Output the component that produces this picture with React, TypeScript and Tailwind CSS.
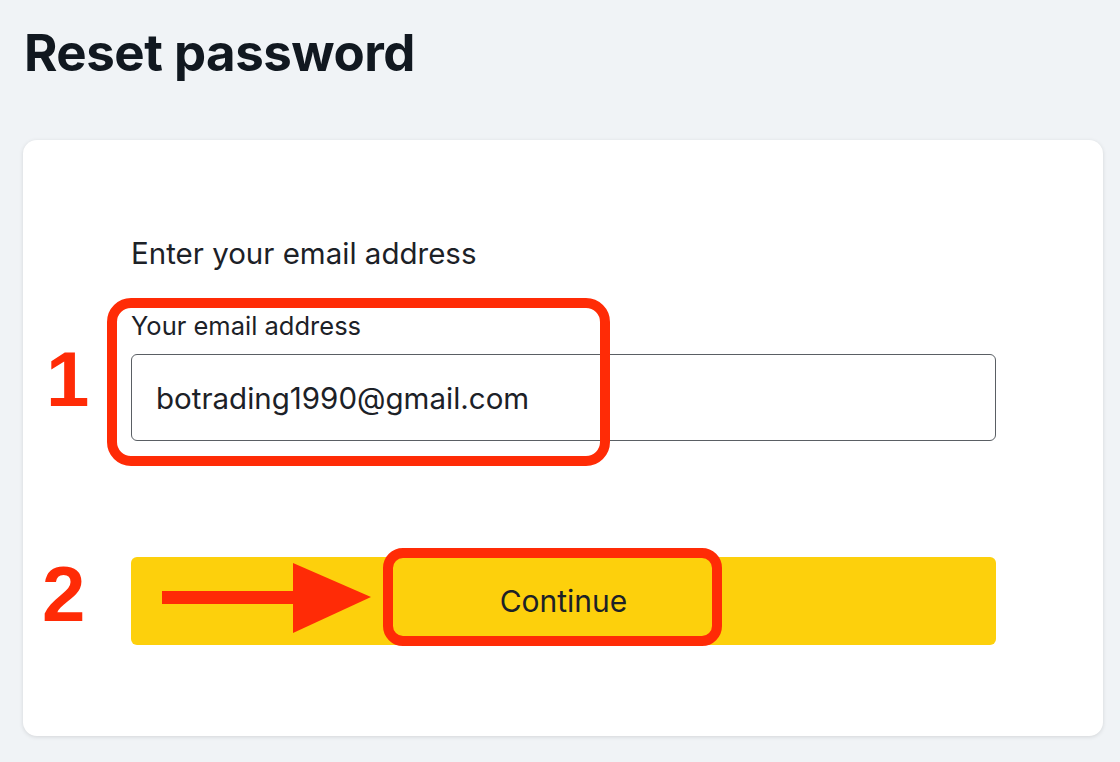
import React from 'react';

const RED = '#ff2b06';

export default function App() {
  return (
    <div
      className="w-[1120px] h-[762px] bg-[#f0f3f6] overflow-hidden relative"
      style={{ fontFamily: 'Inter, "Noto Sans", sans-serif' }}
    >
      <h1 className="pl-[24px] pt-[22px] text-[51px] leading-[62px] font-bold text-[#111820] tracking-[-0.5px]">
        Reset password
      </h1>

      <div className="ml-[23px] mt-[56px] w-[1080px] h-[596px] bg-white rounded-[14px] shadow-[0_1px_4px_rgba(0,0,0,0.12)] pl-[108px] pt-[94px] flex flex-col">
        <p className="text-[29.5px] leading-[38px] text-[#1c2127]">Enter your email address</p>

        <label className="mt-[38px] text-[25.5px] leading-[32px] text-[#1c2127]">Your email address</label>
        <div className="mt-[12px] w-[865px] h-[87px] border-[1.5px] border-[#5a5f64] rounded-[6px] flex items-center pl-[24px]">
          <span className="text-[29.5px] leading-[38px] text-[#1c2127]">botrading1990@gmail.com</span>
        </div>

        <button className="mt-[116px] w-[865px] h-[88px] bg-[#fdd00c] rounded-[6px] flex items-center justify-center text-[30px] text-[#1c2127]">
          Continue
        </button>
      </div>

      {/* annotations */}
      <div
        className="absolute left-[46px] top-[334px] text-[78px] leading-[90px] font-black"
        style={{ color: RED, fontFamily: '"Liberation Sans", Arial, sans-serif' }}
      >
        1
      </div>
      <div
        className="absolute left-[107px] top-[298px] w-[503px] h-[168px] rounded-[24px] border-[10px]"
        style={{ borderColor: RED }}
      />

      <div
        className="absolute left-[42px] top-[549px] text-[78px] leading-[90px] font-black"
        style={{ color: RED, fontFamily: '"Liberation Sans", Arial, sans-serif' }}
      >
        2
      </div>
      <svg className="absolute left-[160px] top-[560px]" width="215" height="76" viewBox="0 0 215 76">
        <rect x="2" y="31" width="140" height="13" fill={RED} />
        <polygon points="133,3 211,37 133,73" fill={RED} />
      </svg>
      <div
        className="absolute left-[383px] top-[548px] w-[339px] h-[98px] rounded-[20px] border-[10px]"
        style={{ borderColor: RED }}
      />
    </div>
  );
}
